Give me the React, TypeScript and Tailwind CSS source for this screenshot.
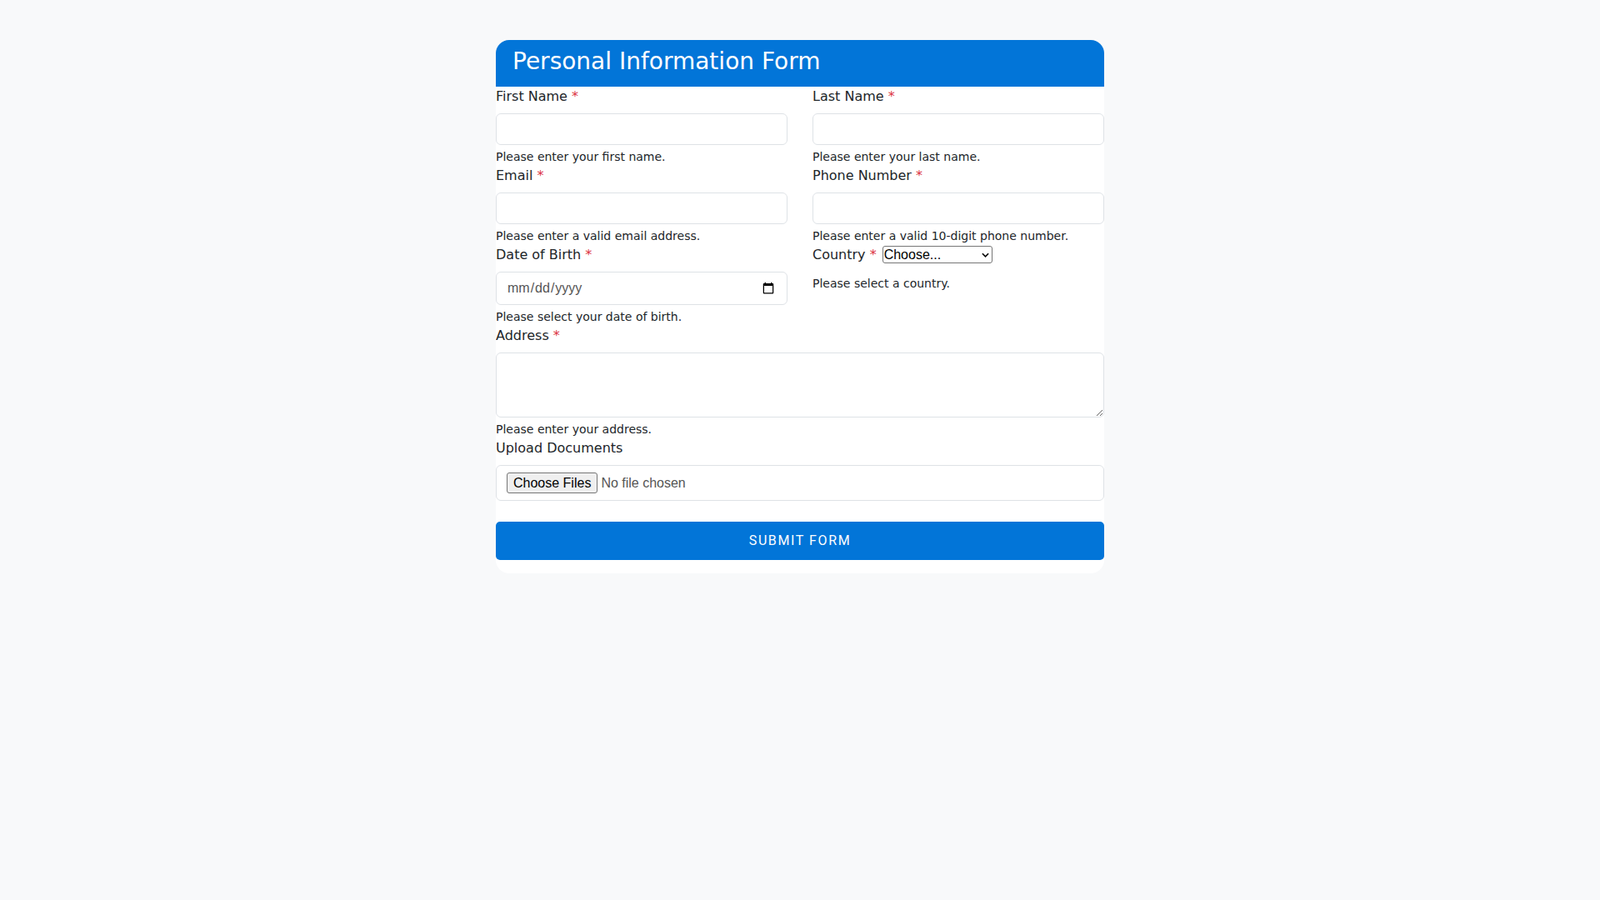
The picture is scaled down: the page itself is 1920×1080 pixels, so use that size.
import React from "react";

const Req = () => <span className="text-[#dc3545]">*</span>;

const Field = ({
  label,
  help,
  required = true,
  children,
}: {
  label: string;
  help: string;
  required?: boolean;
  children: React.ReactNode;
}) => (
  <div>
    <label className="mb-2 block leading-6">
      {label} {required && <Req />}
    </label>
    {children}
    <div className="mt-1 text-sm leading-[21px]">{help}</div>
  </div>
);

const inputCls =
  "block h-[38px] w-full rounded-[6px] border border-[#dee2e6] bg-white px-3 text-base outline-none";

const App = () => {
  return (
    <div className="min-h-screen bg-[#f8f9fa] pt-12 font-['DejaVu_Sans',sans-serif] text-base text-[#212529]">
      <div className="mx-auto w-[730px] overflow-hidden rounded-2xl bg-white pb-4">
        <div className="bg-[#0275d8] pt-[9px] pb-[13px] pl-5">
          <h3 className="text-[28px] leading-[1.2] text-white">Personal Information Form</h3>
        </div>

        <form onSubmit={(e) => e.preventDefault()}>
          <div className="grid grid-cols-2 items-start gap-x-[30px]">
            <Field label="First Name" help="Please enter your first name.">
              <input type="text" className={inputCls} />
            </Field>
            <Field label="Last Name" help="Please enter your last name.">
              <input type="text" className={inputCls} />
            </Field>
            <Field label="Email" help="Please enter a valid email address.">
              <input type="email" className={inputCls} />
            </Field>
            <Field label="Phone Number" help="Please enter a valid 10-digit phone number.">
              <input type="tel" className={inputCls} />
            </Field>
            <Field label="Date of Birth" help="Please select your date of birth.">
              <input
                type="date"
                className="block h-[40px] w-full rounded-[6px] border border-[#dee2e6] bg-white px-3 font-['Liberation_Sans',Arial,sans-serif] text-base text-[#555] outline-none"
              />
            </Field>
            <div>
              <label className="mb-[12px] flex h-6 items-center">
                <span>
                  Country <Req />
                </span>
                <span className="relative ml-[7px] inline-block">
                  <select className="block h-[21px] w-[132px] appearance-none rounded-[3px] border border-[#767676] bg-white pl-px font-['Liberation_Sans',Arial,sans-serif] text-base leading-[19px] text-black">
                    <option>Choose...</option>
                    <option>United States</option>
                    <option>Canada</option>
                    <option>United Kingdom</option>
                  </select>
                  <svg
                    viewBox="0 0 10 6"
                    className="pointer-events-none absolute top-[8px] right-[4px] h-[6px] w-[9px]"
                  >
                    <path d="M1 1 L5 5 L9 1" fill="none" stroke="#000" strokeWidth="1.8" />
                  </svg>
                </span>
              </label>
              <div className="mt-1 text-sm leading-[21px]">Please select a country.</div>
            </div>
          </div>

          <Field label="Address" help="Please enter your address.">
            <textarea className="block h-[78px] w-full rounded-[6px] border border-[#dee2e6] bg-white px-3 py-1.5 text-base outline-none" />
          </Field>

          <div>
            <label className="mb-2 block leading-6">Upload Documents</label>
            <input
              type="file"
              multiple
              className="block w-full rounded-[6px] border border-[#dee2e6] bg-white px-3 py-2 font-['Liberation_Sans',Arial,sans-serif] text-base leading-[25px] text-[#555] file:mr-1 file:rounded-[3px] file:border file:border-solid file:border-[#767676] file:bg-[#efefef] file:px-[7px] file:py-px file:leading-[21px] file:text-black"
            />
          </div>

          <button
            type="submit"
            className="mt-[25px] block h-[46px] w-full rounded-[5px] bg-[#0275d8] font-['Roboto',sans-serif] text-base tracking-[1.6px] text-white uppercase"
          >
            Submit Form
          </button>
        </form>
      </div>
    </div>
  );
};

export default App;
